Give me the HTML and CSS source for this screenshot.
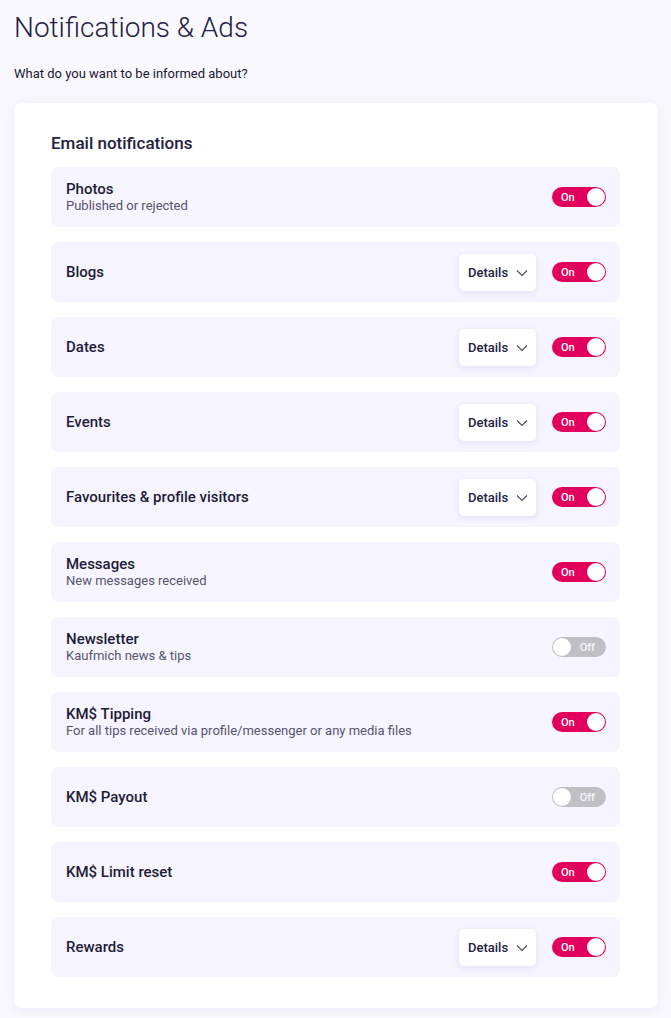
FILE: index.html
```html
<!DOCTYPE html>
<html lang="en">
<head>
<meta charset="utf-8">
<title>Notifications &amp; Ads</title>
<link rel="stylesheet" href="styles.css">
</head>
<body>
<div class="page">
  <h1 class="title">Notifications &amp; Ads</h1>
  <p class="intro">What do you want to be informed about?</p>
  <section class="card">
    <h2 class="card-title">Email notifications</h2>
    <div class="rows">
      <div class="row">
        <div class="text"><div class="name">Photos</div><div class="desc">Published or rejected</div></div>
        <div class="controls"><span class="toggle on"><span class="lbl">On</span><span class="knob"></span></span></div>
      </div>
      <div class="row">
        <div class="text"><div class="name">Blogs</div></div>
        <div class="controls">
          <button class="details">Details <svg class="chev" viewBox="0 0 12 8" width="12" height="8"><path d="M1 1.5 6 6.5 11 1.5" fill="none" stroke="currentColor" stroke-width="1.1"/></svg></button>
          <span class="toggle on"><span class="lbl">On</span><span class="knob"></span></span>
        </div>
      </div>
      <div class="row">
        <div class="text"><div class="name">Dates</div></div>
        <div class="controls">
          <button class="details">Details <svg class="chev" viewBox="0 0 12 8" width="12" height="8"><path d="M1 1.5 6 6.5 11 1.5" fill="none" stroke="currentColor" stroke-width="1.1"/></svg></button>
          <span class="toggle on"><span class="lbl">On</span><span class="knob"></span></span>
        </div>
      </div>
      <div class="row">
        <div class="text"><div class="name">Events</div></div>
        <div class="controls">
          <button class="details">Details <svg class="chev" viewBox="0 0 12 8" width="12" height="8"><path d="M1 1.5 6 6.5 11 1.5" fill="none" stroke="currentColor" stroke-width="1.1"/></svg></button>
          <span class="toggle on"><span class="lbl">On</span><span class="knob"></span></span>
        </div>
      </div>
      <div class="row">
        <div class="text"><div class="name">Favourites &amp; profile visitors</div></div>
        <div class="controls">
          <button class="details">Details <svg class="chev" viewBox="0 0 12 8" width="12" height="8"><path d="M1 1.5 6 6.5 11 1.5" fill="none" stroke="currentColor" stroke-width="1.1"/></svg></button>
          <span class="toggle on"><span class="lbl">On</span><span class="knob"></span></span>
        </div>
      </div>
      <div class="row">
        <div class="text"><div class="name">Messages</div><div class="desc">New messages received</div></div>
        <div class="controls"><span class="toggle on"><span class="lbl">On</span><span class="knob"></span></span></div>
      </div>
      <div class="row">
        <div class="text"><div class="name">Newsletter</div><div class="desc">Kaufmich news &amp; tips</div></div>
        <div class="controls"><span class="toggle off"><span class="knob"></span><span class="lbl">Off</span></span></div>
      </div>
      <div class="row">
        <div class="text"><div class="name">KM$ Tipping</div><div class="desc">For all tips received via profile/messenger or any media files</div></div>
        <div class="controls"><span class="toggle on"><span class="lbl">On</span><span class="knob"></span></span></div>
      </div>
      <div class="row">
        <div class="text"><div class="name">KM$ Payout</div></div>
        <div class="controls"><span class="toggle off"><span class="knob"></span><span class="lbl">Off</span></span></div>
      </div>
      <div class="row">
        <div class="text"><div class="name">KM$ Limit reset</div></div>
        <div class="controls"><span class="toggle on"><span class="lbl">On</span><span class="knob"></span></span></div>
      </div>
      <div class="row">
        <div class="text"><div class="name">Rewards</div></div>
        <div class="controls">
          <button class="details">Details <svg class="chev" viewBox="0 0 12 8" width="12" height="8"><path d="M1 1.5 6 6.5 11 1.5" fill="none" stroke="currentColor" stroke-width="1.1"/></svg></button>
          <span class="toggle on"><span class="lbl">On</span><span class="knob"></span></span>
        </div>
      </div>
    </div>
  </section>
</div>
</body>
</html>
```

FILE: styles.css
```css
* { box-sizing: border-box; }
html, body { margin: 0; padding: 0; }
body {
  background: #f9f8fe;
  font-family: Roboto, "Liberation Sans", Arial, sans-serif;
  color: #1f1c38;
}
.page {
  padding: 10px 13px 10px 14px;
}
.title {
  margin: 0;
  font-size: 28px;
  font-weight: 300;
  line-height: 36px;
  color: #24213f;
}
.intro {
  margin: 20px 0 0;
  font-size: 13px;
  line-height: 16px;
  color: #1a1830;
}
.card {
  margin-top: 21px;
  background: #fff;
  border-radius: 8px;
  box-shadow: 0 2px 10px rgba(120, 100, 230, 0.10);
  padding: 30px 38px 31px 37px;
}
.card-title {
  margin: 0 0 14px;
  font-size: 17px;
  font-weight: 500;
  line-height: 20px;
  color: #24213f;
}
.rows {
  display: flex;
  flex-direction: column;
  gap: 15px;
}
.row {
  height: 60px;
  background: #f6f4fe;
  border-radius: 7px;
  display: flex;
  align-items: center;
  justify-content: space-between;
  padding: 0 14px 0 15px;
}
.name {
  font-size: 15px;
  font-weight: 500;
  line-height: 16px;
  color: #1f1c38;
}
.desc {
  font-size: 13px;
  line-height: 17px;
  color: #56536e;
}
.controls {
  display: flex;
  align-items: center;
  gap: 16px;
}
.details {
  width: 77px;
  height: 37px;
  border: none;
  background: #fff;
  border-radius: 5px;
  box-shadow: 0 2px 6px rgba(110, 90, 220, 0.13);
  font-family: inherit;
  font-size: 13px;
  font-weight: 500;
  color: #24213f;
  display: flex;
  align-items: center;
  justify-content: flex-start;
  padding: 0 0 0 9px;
  gap: 8px;
  cursor: pointer;
}
.chev { color: #4a4763; margin-top: 1px; }
.toggle {
  width: 54px;
  height: 20px;
  border-radius: 10px;
  display: flex;
  align-items: center;
  padding: 0 1px;
  font-size: 11px;
  font-weight: 500;
}
.toggle.on {
  background: #e2005d;
  color: #fff;
  justify-content: space-between;
  padding-left: 9px;
}
.toggle.off {
  background: #bfbfc4;
  color: #f4f4f8;
  justify-content: space-between;
  padding-right: 11px;
}
.knob {
  width: 18px;
  height: 18px;
  border-radius: 50%;
  background: #fff;
}
```
